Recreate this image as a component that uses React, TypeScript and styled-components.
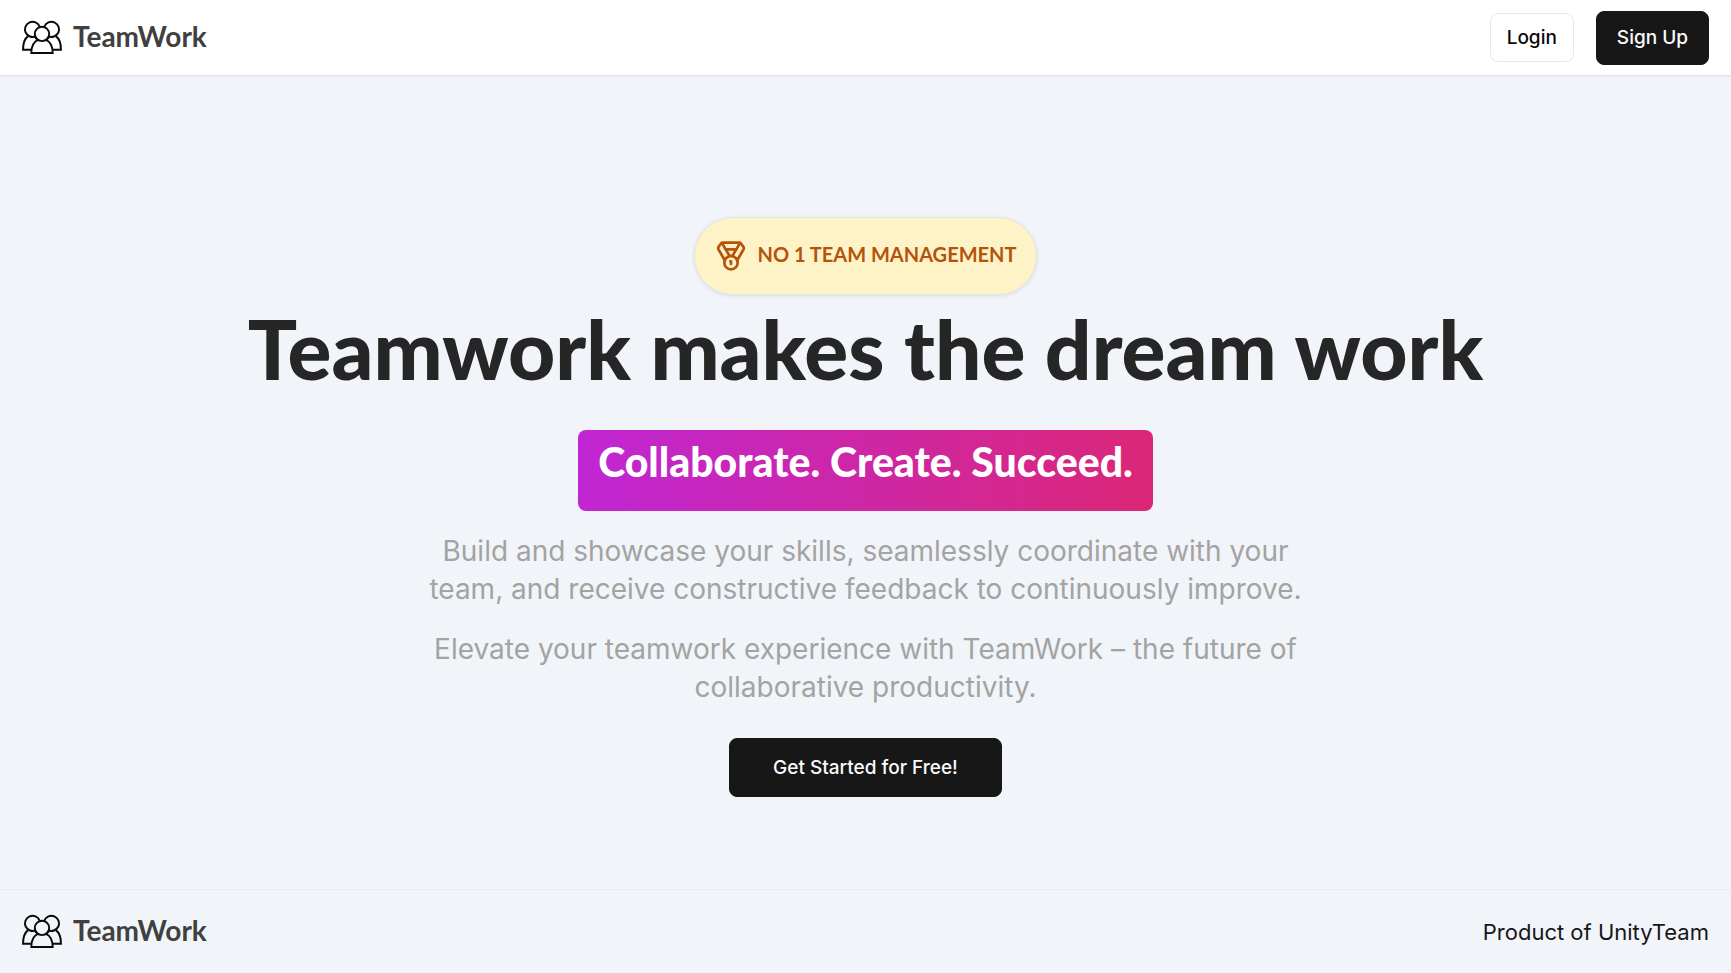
import React from "react";
import styled, { createGlobalStyle } from "styled-components";
import { Medal } from "lucide-react";

const headingFont = `Lato, "Open Sans", sans-serif`;
const bodyFont = `Inter, "Liberation Sans", sans-serif`;

const GlobalStyle = createGlobalStyle`
  *, *::before, *::after { box-sizing: border-box; }
  body { margin: 0; background: #f1f5f9; color: #171717; font-family: ${bodyFont}; }
  h1, p { margin: 0; }
  a { color: inherit; text-decoration: none; }
`;

const Page = styled.div`
  min-height: 100vh;
  display: flex;
  flex-direction: column;
`;

const Bar = styled.div`
  display: flex;
  align-items: center;
  justify-content: space-between;
  padding: 0 22px;
`;

const Header = styled(Bar).attrs({ as: "header" })`
  height: 75px;
  background: #ffffff;
  box-shadow: 0 1px 3px rgba(0, 0, 0, 0.1);
`;

const Footer = styled(Bar).attrs({ as: "footer" })`
  height: 84px;
  border-top: 1px solid #e7eaee;
  font-size: 22px;
`;

const Brand = styled.a`
  display: flex;
  align-items: center;
  gap: 11px;
  color: #404040;
  font: 700 28px/36px ${headingFont};
`;

const BrandName = styled.span`
  padding-bottom: 4px;
`;

const Actions = styled.nav`
  display: flex;
  align-items: center;
  gap: 22px;
`;

const Button = styled.button<{ $variant?: "outline"; $size?: "compact" | "wide" }>`
  height: ${(p) => (p.$size === "compact" ? 49 : p.$size === "wide" ? 59 : 54)}px;
  padding: 0 ${(p) => (p.$size === "compact" ? 16 : p.$size === "wide" ? 43 : 20)}px;
  border: 1px solid ${(p) => (p.$variant === "outline" ? "#e8e8e8" : "#171717")};
  border-radius: 8px;
  background: ${(p) => (p.$variant === "outline" ? "#ffffff" : "#171717")};
  color: ${(p) => (p.$variant === "outline" ? "#0a0a0a" : "#fafafa")};
  font: 500 19px/27px ${bodyFont};
  cursor: pointer;
`;

const Main = styled.main`
  flex: 1;
  display: flex;
  flex-direction: column;
  align-items: center;
  justify-content: center;
  padding: 50px 22px 0;
  text-align: center;
`;

const Badge = styled.div`
  display: flex;
  align-items: center;
  gap: 11px;
  height: 78px;
  padding: 0 20px;
  border: 1px solid #e8e6dc;
  border-radius: 39px;
  background: #fef3c7;
  box-shadow: 0 1px 4px rgba(0, 0, 0, 0.1);
  color: #b45309;
  font: 700 20px/30px ${headingFont};
`;

const BadgeText = styled.span`
  padding-bottom: 4px;
`;

const Title = styled.h1`
  margin-top: 11px;
  color: #262626;
  font: 900 82px/84px ${headingFont};
`;

const Tagline = styled.p`
  margin-top: 40px;
  height: 81px;
  padding: 8px 20px 0;
  border-radius: 8px;
  background: linear-gradient(to right, #c026d3, #db2777);
  color: #ffffff;
  font: 900 41px/48px ${headingFont};
`;

const Description = styled.div`
  display: flex;
  flex-direction: column;
  gap: 22px;
  max-width: 908px;
  margin: 21px 0 32px;
  color: #a3a3a3;
  font-size: 28px;
  line-height: 38px;
`;

function TeamIcon() {
  return (
    <svg width="40" height="35" viewBox="-.5 -1 41 36" fill="none" stroke="#0a0a0a" strokeWidth="2" aria-hidden="true">
      <circle cx="20" cy="13.3" r="7.4" />
      <path d="M17.6 5.9A7.8 7.8 0 1 0 13.8 15.6" />
      <path d="M22.4 5.9A7.8 7.8 0 1 1 26.2 15.6" />
      <path d="M5.8 15.6C2.4 18 .5 22.5.5 29.5H9.5" />
      <path d="M34.2 15.6C37.6 18 39.5 22.5 39.5 29.5H30.5" />
      <path d="M12.5 16.3C13.6 17 14.5 18.2 15.3 19.3M27.5 16.3C26.4 17 25.5 18.2 24.7 19.3" />
      <path d="M15.8 19.4C11.5 21.4 9 25.5 9 33H31C31 25.5 28.5 21.4 24.2 19.4" />
    </svg>
  );
}

function Logo() {
  return (
    <Brand href="#">
      <TeamIcon />
      <BrandName>TeamWork</BrandName>
    </Brand>
  );
}

export default function App() {
  return (
    <Page>
      <GlobalStyle />
      <Header>
        <Logo />
        <Actions>
          <Button type="button" $variant="outline" $size="compact">Login</Button>
          <Button type="button">Sign Up</Button>
        </Actions>
      </Header>
      <Main>
        <Badge>
          <Medal size={32} aria-hidden="true" />
          <BadgeText>NO 1 TEAM MANAGEMENT</BadgeText>
        </Badge>
        <Title>Teamwork makes the dream work</Title>
        <Tagline>Collaborate. Create. Succeed.</Tagline>
        <Description>
          <p>
            Build and showcase your skills, seamlessly coordinate with your team, and receive
            constructive feedback to continuously improve.
          </p>
          <p>
            Elevate your teamwork experience with TeamWork – the future of collaborative
            productivity.
          </p>
        </Description>
        <Button type="button" $size="wide">Get Started for Free!</Button>
      </Main>
      <Footer>
        <Logo />
        <span>Product of UnityTeam</span>
      </Footer>
    </Page>
  );
}
